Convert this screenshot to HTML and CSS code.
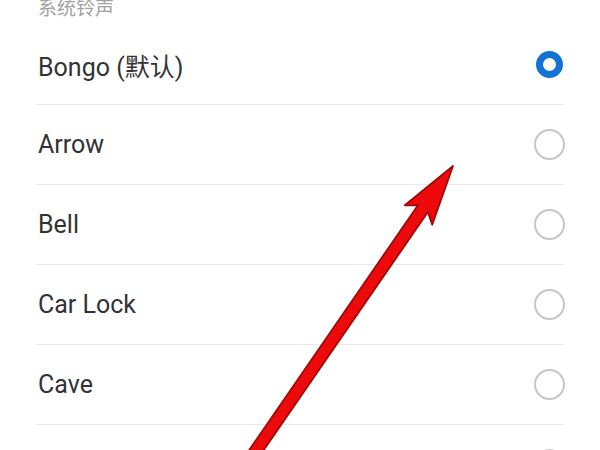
FILE: index.html
```html
<!DOCTYPE html>
<html lang="zh">
<head>
<meta charset="utf-8">
<title>系统铃声</title>
<link rel="stylesheet" href="styles.css">
</head>
<body>
<div class="page">
  <div class="section-title">系统铃声</div>
  <ul class="list">
    <li class="row"><span class="label">Bongo (默认)</span><span class="radio-box"><span class="radio checked"></span></span></li>
    <li class="row"><span class="label">Arrow</span><span class="radio-box"><span class="radio"></span></span></li>
    <li class="row"><span class="label">Bell</span><span class="radio-box"><span class="radio"></span></span></li>
    <li class="row"><span class="label">Car Lock</span><span class="radio-box"><span class="radio"></span></span></li>
    <li class="row"><span class="label">Cave</span><span class="radio-box"><span class="radio"></span></span></li>
    <li class="row"><span class="label">Chimes</span><span class="radio-box"><span class="radio"></span></span></li>
  </ul>
  <svg class="annot" width="600" height="450" viewBox="0 0 600 450" aria-hidden="true">
    <path d="M248.1 451.55 L418.1 205.05 L404.8 205.3 L453 166 L432.2 224.7 L427.9 211.95 L257.9 458.45 Z" fill="#ee0a0a" stroke="#9e0a0a" stroke-width="1.8" stroke-linejoin="round"/>
  </svg>
</div>
</body>
</html>
```
FILE: styles.css
```css
html, body {
  margin: 0;
  padding: 0;
  background: #ffffff;
  overflow: hidden;
}
.page {
  position: relative;
  width: 600px;
  height: 450px;
  overflow: hidden;
  padding: 0 36px;
  box-sizing: border-box;
  font-family: Roboto, "Noto Sans CJK SC", sans-serif;
}
.section-title {
  height: 25px;
  line-height: 18px;
  font-size: 19px;
  color: #a2a2a2;
  padding-left: 2px;
}
.list {
  list-style: none;
  margin: 0;
  padding: 0;
}
.row {
  display: flex;
  align-items: center;
  justify-content: space-between;
  height: 79px;
  border-bottom: 1px solid #e9e9e9;
}
.label {
  font-size: 25px;
  color: #333333;
  padding-left: 2px;
}
.radio-box {
  width: 32px;
  height: 32px;
  display: flex;
  align-items: center;
  justify-content: center;
  margin-right: -1px;
}
.radio {
  width: 31px;
  height: 31px;
  box-sizing: border-box;
  border-radius: 50%;
  border: 2px solid #c6c6c6;
}
.radio.checked {
  width: 27px;
  height: 27px;
  border: 7px solid #1273d6;
}
.annot {
  position: absolute;
  left: 0;
  top: 0;
  pointer-events: none;
}
```
